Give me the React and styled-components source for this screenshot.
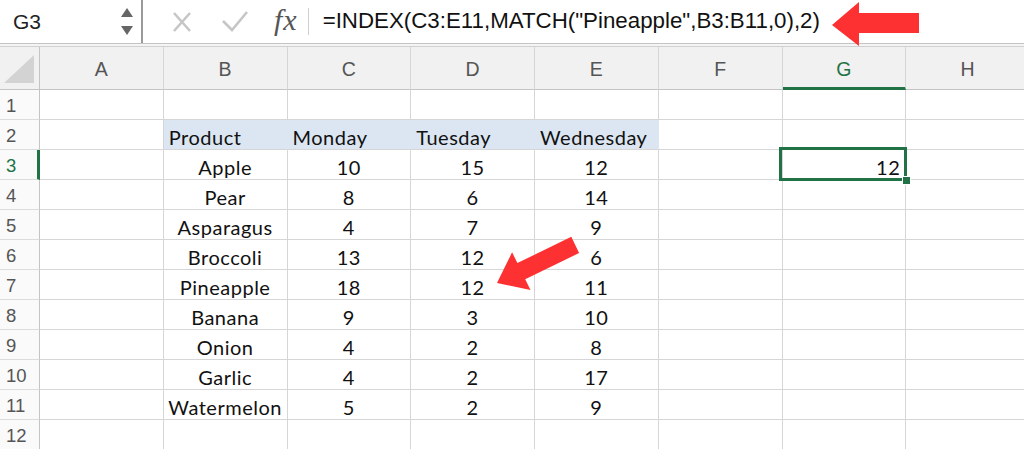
import React from "react";
import styled, { createGlobalStyle, css } from "styled-components";

const GREEN = "#217346";
const GRID = "#d6d6d6";

const GlobalStyle = createGlobalStyle`
  html, body {
    margin: 0;
    padding: 0;
    background: #fff;
    overflow: hidden;
  }
  * { box-sizing: border-box; }
`;

const Page = styled.div`
  position: relative;
  width: 1024px;
  height: 449px;
  overflow: hidden;
  background: #fff;
`;

/* ---------- formula bar ---------- */

const FormulaBar = styled.div`
  display: flex;
  align-items: stretch;
  height: 44px;
  border-bottom: 1px solid #c4c4c4;
  font-family: "Liberation Sans", Arial, sans-serif;
`;

const NameBox = styled.div`
  display: flex;
  align-items: center;
  justify-content: space-between;
  width: 143px;
  padding: 0 7px 0 13px;
  font-size: 21px;
  color: #222;
  border-right: 2px solid #9a9a9a;
`;

const Stepper = styled.svg`
  width: 14px;
  height: 30px;
`;

const Tools = styled.div`
  display: flex;
  align-items: center;
  padding-left: 26px;
`;

const ToolIcon = styled.svg`
  width: 26px;
  height: 26px;
  margin-right: 27px;
`;

const Fx = styled.span`
  font-family: "Liberation Serif", "Times New Roman", serif;
  font-style: italic;
  font-size: 30px;
  color: #555;
  letter-spacing: 1px;
  margin-left: -1px;
  padding-bottom: 4px;
`;

const ToolDivider = styled.div`
  width: 1px;
  height: 27px;
  background: #cfcfcf;
  margin: 0 14px 0 10px;
`;

const FormulaText = styled.div`
  display: flex;
  align-items: center;
  font-size: 22.3px;
  color: #111;
  white-space: nowrap;
  padding-bottom: 1px;
`;

const BarGap = styled.div`
  height: 3px;
  background: #f4f4f4;
  border-bottom: 1px solid #d0d0d0;
`;

/* ---------- sheet ---------- */

const Sheet = styled.div`
  display: grid;
  grid-template-columns: 40px repeat(8, 123.75px);
  grid-template-rows: 43px repeat(12, 30px);
`;

const Corner = styled.div`
  display: flex;
  align-items: flex-end;
  justify-content: flex-end;
  padding: 0 5px 6px 0;
  background: #f1f1f1;
  border-right: 1px solid #c4c4c4;
  border-bottom: 1px solid #c4c4c4;
`;

const ColHeader = styled.div`
  display: flex;
  align-items: center;
  justify-content: center;
  padding-top: 3px;
  background: #f1f1f1;
  border-right: 1px solid #d6d6d6;
  border-bottom: 1px solid #c4c4c4;
  font-family: "Liberation Sans", Arial, sans-serif;
  font-size: 19.5px;
  color: #555;
  ${(p) =>
    p.$active &&
    css`
      color: ${GREEN};
      border-bottom: 3px solid ${GREEN};
      padding-top: 5px;
    `}
`;

const RowHeader = styled.div`
  display: flex;
  align-items: center;
  padding: 3px 0 0 6px;
  background: #fafafa;
  border-right: 1px solid #c4c4c4;
  border-bottom: 1px solid #dcdcdc;
  font-family: "Liberation Sans", Arial, sans-serif;
  font-size: 18.5px;
  color: #555;
  ${(p) =>
    p.$active &&
    css`
      color: ${GREEN};
      border-right: 3px solid ${GREEN};
    `}
`;

const Cell = styled.div`
  position: relative;
  display: flex;
  align-items: center;
  justify-content: ${(p) => p.$align || "center"};
  padding: 4px 5px 0 5px;
  border-right: 1px solid ${(p) => (p.$fill ? p.$fill : GRID)};
  border-bottom: 1px solid ${GRID};
  background: ${(p) => p.$fill || "#fff"};
  font-family: Lato, "Open Sans", sans-serif;
  font-size: 20px;
  letter-spacing: 0.5px;
  color: #111;
  white-space: nowrap;
`;

const Selection = styled.div`
  position: absolute;
  z-index: 2;
  top: -3px;
  left: -4px;
  right: -2px;
  bottom: -2px;
  border: 3px solid ${GREEN};
  pointer-events: none;
`;

const FillHandle = styled.div`
  position: absolute;
  z-index: 3;
  right: -6px;
  bottom: -6px;
  width: 9px;
  height: 9px;
  background: ${GREEN};
  border: 1px solid #fff;
`;

const Annotations = styled.svg`
  position: absolute;
  z-index: 5;
  inset: 0;
  width: 1024px;
  height: 449px;
  pointer-events: none;
`;

const COLS = ["A", "B", "C", "D", "E", "F", "G", "H"];

const DATA = [
  ["Apple", 10, 15, 12],
  ["Pear", 8, 6, 14],
  ["Asparagus", 4, 7, 9],
  ["Broccoli", 13, 12, 6],
  ["Pineapple", 18, 12, 11],
  ["Banana", 9, 3, 10],
  ["Onion", 4, 2, 8],
  ["Garlic", 4, 2, 17],
  ["Watermelon", 5, 2, 9],
];

const HEADINGS = ["Product", "Monday", "Tuesday", "Wednesday"];

function rowCells(r) {
  // r is 1-based row number
  if (r === 2) {
    return COLS.map((c, i) => {
      if (i >= 1 && i <= 4)
        return (
          <Cell key={c} $align="flex-start" $fill="#dce6f2">
            {HEADINGS[i - 1]}
          </Cell>
        );
      return <Cell key={c} />;
    });
  }
  const item = DATA[r - 3];
  return COLS.map((c, i) => {
    if (item && i >= 1 && i <= 4) return <Cell key={c}>{item[i - 1]}</Cell>;
    if (r === 3 && c === "G")
      return (
        <Cell key={c} $align="flex-end">
          12
          <Selection />
          <FillHandle />
        </Cell>
      );
    return <Cell key={c} />;
  });
}

export default function App() {
  const rows = Array.from({ length: 12 }, (_, i) => i + 1);
  return (
    <Page>
      <GlobalStyle />
      <FormulaBar>
        <NameBox>
          G3
          <Stepper viewBox="0 0 14 30">
            <path d="M1 10 L7 1 L13 10 Z" fill="#666" />
            <path d="M1 19 L13 19 L7 28 Z" fill="#666" />
          </Stepper>
        </NameBox>
        <Tools>
          <ToolIcon viewBox="0 0 26 26">
            <path
              d="M5 4 L21 22 M21 4 L5 22"
              stroke="#c6c6c6"
              strokeWidth="2.6"
              fill="none"
            />
          </ToolIcon>
          <ToolIcon viewBox="0 0 26 26">
            <path
              d="M1 12 L10 21 L25 3"
              stroke="#c6c6c6"
              strokeWidth="2.6"
              fill="none"
            />
          </ToolIcon>
          <Fx>fx</Fx>
          <ToolDivider />
        </Tools>
        <FormulaText>=INDEX(C3:E11,MATCH("Pineapple",B3:B11,0),2)</FormulaText>
      </FormulaBar>
      <BarGap />
      <Sheet>
        <Corner>
          <svg width="30" height="28" viewBox="0 0 30 28">
            <path d="M0 28 L30 28 L30 0 Z" fill="#d3d3d3" />
          </svg>
        </Corner>
        {COLS.map((c) => (
          <ColHeader key={c} $active={c === "G"}>
            {c}
          </ColHeader>
        ))}
        {rows.map((r) => (
          <React.Fragment key={r}>
            <RowHeader $active={r === 3}>{r}</RowHeader>
            {rowCells(r)}
          </React.Fragment>
        ))}
      </Sheet>
      <Annotations viewBox="0 0 1024 449">
        <polygon
          points="832,25 859,2 859,13 919,13 919,33 859,33 859,46"
          fill="#fd3131"
        />
        <polygon
          points="497,283 512.1,252.3 517.4,263.1 571.3,236.8 579.1,253 525.2,279.3 530.5,290.1"
          fill="#fd3131"
        />
      </Annotations>
    </Page>
  );
}
